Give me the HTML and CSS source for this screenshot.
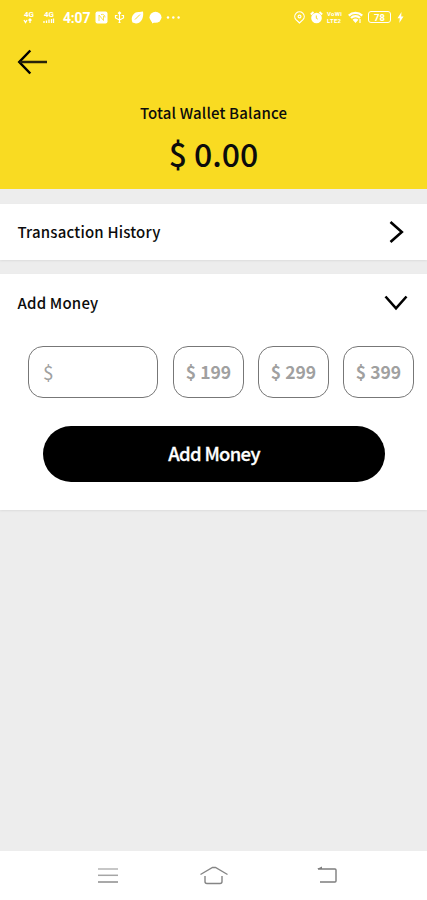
FILE: index.html
```html
<!DOCTYPE html>
<html lang="en">
<head>
<meta charset="utf-8">
<title>Wallet</title>
<link rel="stylesheet" href="styles.css">
</head>
<body>
<div class="screen">
  <header class="header">
    <div class="status">
      <div class="status-group">
        <span class="signal"><b>4G</b><svg width="12" height="6" viewBox="0 0 12 6"><path d="M1 2l1.500 2.500L4 2M7 5V1.500M5.500 2.500L7 1l1.500 1.500" /></svg></span>
        <span class="signal signal-second"><b>4G</b><svg width="12" height="6" viewBox="0 0 12 6"><path d="M1 5V3M3.500 5V2.500M6 5V1.500M8.500 5V1M10.500 5V.5" /></svg></span>
        <span class="clock">4:07</span>
        <svg class="nfc" width="13" height="13" viewBox="0 0 13 13"><rect x=".5" y=".5" width="12" height="12" rx="2" fill="#fff"/><path d="M4 10V4l4.500 5.500V5M6 3.500c2.500-.5 4 .5 4 3" fill="none" stroke="#f9db22" stroke-width=".8"/></svg>
        <svg class="usb" width="11" height="13" viewBox="0 0 11 13"><path d="M5.500 1v11M4 2.500L5.500 1 7 2.500M5.500 9L1.500 7V4.500h2M5.500 9l4-2V4.500h-2M4.500 11.500h2" fill="none" stroke="#fff" stroke-width="1.200"/></svg>
        <svg class="leaf" width="13" height="13" viewBox="0 0 13 13"><path d="M1.500 11.500C-1 6 3 0 8.500 1l3.500-.5c1 6-1.500 12-7 12z" fill="#fff"/><path d="M4 8.500l5-5" stroke="#f9db22" stroke-width="1"/></svg>
        <svg class="bubble" width="13" height="13" viewBox="0 0 13 13"><ellipse cx="6.500" cy="6.300" rx="6" ry="5.500" fill="#fff"/><path d="M3 10v2.500L6 11z" fill="#fff"/></svg>
        <svg class="more" width="15" height="13" viewBox="0 0 15 13" fill="#fff"><circle cx="2" cy="6.500" r="1.200"/><circle cx="7.300" cy="6.500" r="1.200"/><circle cx="12.600" cy="6.500" r="1.200"/></svg>
      </div>
      <div class="status-group">
        <svg width="11" height="13" viewBox="0 0 11 13" fill="none" stroke="#fff" stroke-width="1.200"><path d="M5.500 12L2 8.600a4.700 4.700 0 1 1 7 0z"/><circle cx="5.500" cy="5.500" r="1.400"/></svg>
        <svg class="alarm" width="13" height="13" viewBox="0 0 13 13"><circle cx="6.500" cy="7" r="5.300" fill="#fff"/><path d="M.8 3.500L3.500 1M12.200 3.500L9.500 1" stroke="#fff" stroke-width="1.800"/><path d="M6.300 4.500v2.800l1.500.8" fill="none" stroke="#f9db22" stroke-width="1"/></svg>
        <span class="volte"><span>VoWi</span><span>LTE2</span></span>
        <svg class="wifi" width="15" height="13" viewBox="0 0 15 13" fill="none" stroke="#fff"><path d="M.8 4.600a9.600 9.600 0 0 1 13.400 0M3 7a6.300 6.300 0 0 1 9 0" stroke-width="2.200"/><path d="M4.600 8.700L7.500 12l2.900-3.300a4 4 0 0 0-5.800 0z" fill="#fff" stroke="none"/><path d="M12 8v4" stroke-width="1.200"/></svg>
        <span class="battery">78</span>
        <svg class="bolt" width="7" height="13" viewBox="0 0 7 13"><path d="M4.500 1L.5 7.200h2.300L2.300 12l4.200-6.500H4.200z" fill="#fff"/></svg>
      </div>
    </div>
    <svg class="back" width="32" height="28" viewBox="0 0 32 28" fill="none" stroke="#000" stroke-width="2.500"><path d="M13.300 2.500L2.300 14l11 11.500"/><path d="M2.500 14h27.500" stroke="#28230a"/></svg>
    <div class="balance-label">Total Wallet Balance</div>
    <div class="balance">$ 0.00</div>
  </header>
  <main class="content">
    <section class="row history">
      <span class="row-title">Transaction History</span>
      <svg width="24" height="24" viewBox="0 0 24 24" fill="none" stroke="#000" stroke-width="2.600"><path d="M6.500 2l11.300 10L6.500 22"/></svg>
    </section>
    <section class="add">
      <div class="row add-head">
        <span class="row-title">Add Money</span>
        <svg width="24" height="24" viewBox="0 0 24 24" fill="none" stroke="#000" stroke-width="2.600"><path d="M1.500 5.500L12 17.300 22.500 5.500"/></svg>
      </div>
      <div class="amounts">
        <div class="box input">$</div>
        <div class="box">$ 199</div>
        <div class="box">$ 299</div>
        <div class="box">$ 399</div>
      </div>
      <div class="submit">Add Money</div>
    </section>
  </main>
  <nav class="nav">
    <svg width="22" height="20" viewBox="0 0 22 20" fill="none" stroke-width="1.500"><path d="M1 3h20" stroke="#b5b5b5"/><path d="M1 9.300h20" stroke="#a5a5a5"/><path d="M1 16h20" stroke="#8c8c8c"/></svg>
    <svg class="home" width="30" height="20" viewBox="0 0 30 20" fill="none" stroke="#858585" stroke-width="1.400"><path d="M1.500 8.500L13.500 1.500h3l12 7"/><path d="M6 10v5.500q0 2 2 2h13q2 0 2-2V10"/></svg>
    <svg width="22" height="20" viewBox="0 0 22 20" fill="none" stroke="#7d7d7d" stroke-width="1.400"><path d="M2 3h17q1 0 1 1v11q0 1-1 1H4"/><path d="M1 3l5-2.500V3z" fill="#7d7d7d" stroke="none"/></svg>
  </nav>
</div>
</body>
</html>
```
FILE: styles.css
```css
* { box-sizing: border-box; }
body { margin: 0; font-family: "Noto Sans CJK SC", "Noto Sans", sans-serif; color: #0c0c0c; }
svg { display: block; flex: none; }
.screen { width: 427px; height: 900px; display: flex; flex-direction: column; background: #ededed; overflow: hidden; }
.header { height: 189px; flex: none; background: #f9db22; }
.status { height: 34px; padding: 0 23px; display: flex; justify-content: space-between; align-items: center; color: #fff; font-family: Roboto, sans-serif; }
.status-group { display: flex; align-items: center; }
.signal { width: 12px; display: flex; flex-direction: column; font-size: 8px; line-height: 7px; }
.signal b { padding-left: 1px; }
.signal path { fill: none; stroke: #fff; stroke-width: 1.3; }
.signal-second { margin-left: 8px; }
.clock { width: 29px; margin-left: 8px; padding-top: 2px; font-size: 14px; font-weight: 700; line-height: 14px; letter-spacing: -.2px; white-space: nowrap; }
.nfc { margin-left: 3px; }
.usb { margin-left: 6px; }
.leaf { margin-left: 6px; }
.bubble { margin-left: 5px; }
.more { margin-left: 4px; }
.alarm { margin-left: 5px; }
.volte { width: 17px; height: 14px; margin-left: 4px; display: flex; flex-direction: column; justify-content: space-between; font-size: 6px; line-height: 7px; font-weight: 700; letter-spacing: .3px; }
.wifi { margin-left: 4px; }
.battery { width: 23px; height: 12px; margin-left: 5px; border: 1.4px solid #fff; border-radius: 3px; font-size: 9.5px; line-height: 11px; font-weight: 700; text-align: center; }
.bolt { margin-left: 6px; }
.back { margin: 14px 0 0 17px; }
.balance-label { margin-top: 25px; text-align: center; font-size: 15px; line-height: 24px; font-weight: 500; letter-spacing: .15px; }
.balance { margin-top: 8px; text-align: center; font-size: 32px; line-height: 40px; font-weight: 500; }
.content { flex: 1; padding-top: 15px; }
.row { height: 56px; padding: 0 19px 0 17.5px; display: flex; align-items: center; justify-content: space-between; }
.row-title { font-size: 15px; font-weight: 500; line-height: 24px; letter-spacing: .18px; }
.history { background: #fff; box-shadow: 0 1px 2px #dcdcdc; }
.add { height: 236px; margin-top: 14px; background: #fff; box-shadow: 0 1px 2px #dcdcdc; }
.add-head { height: 58px; }
.amounts { padding: 14px 13px 0 28px; display: flex; justify-content: space-between; }
.box { width: 71px; height: 52px; padding-bottom: 1px; border: 1.5px solid #777; border-radius: 15px; display: flex; align-items: center; justify-content: center; font-size: 17.5px; font-weight: 700; color: #a0a0a0; }
.input { width: 130px; margin-right: 1px; justify-content: flex-start; padding-left: 14px; font-weight: 400; font-size: 19px; }
.submit { width: 342px; height: 56px; padding-bottom: 3px; margin: 28px 0 0 43px; border-radius: 28px; background: #000; color: #fff; display: flex; align-items: center; justify-content: center; font-size: 18.5px; font-weight: 500; letter-spacing: -.7px; -webkit-text-stroke: .3px #fff; }
.nav { height: 49px; flex: none; background: #fff; display: flex; justify-content: space-between; align-items: center; padding: 0 89px 0 97px; }
.home { margin-right: 7px; }
```
